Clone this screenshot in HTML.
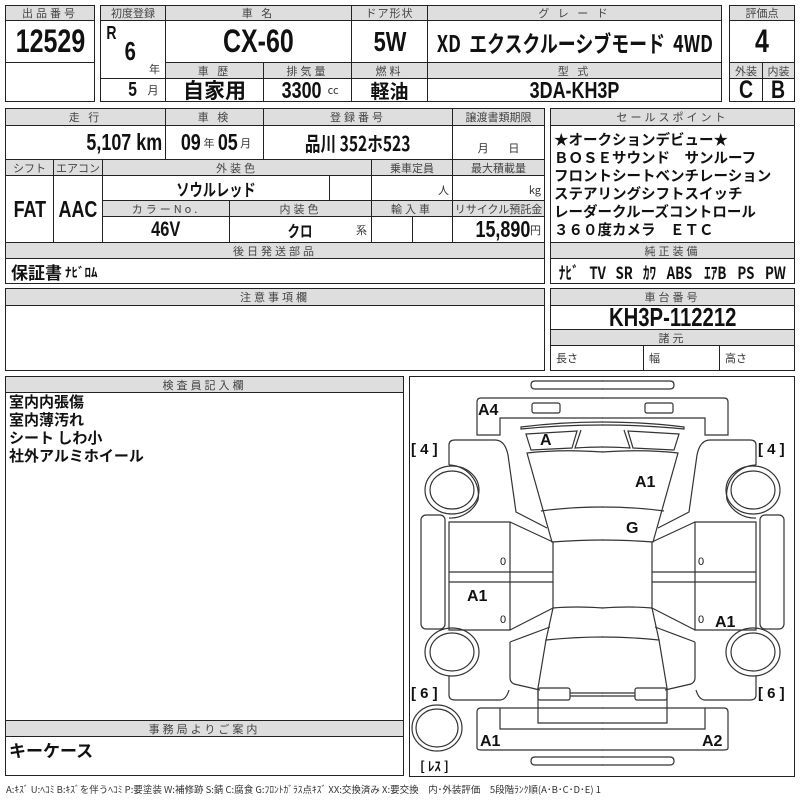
<!DOCTYPE html>
<html><head><meta charset="utf-8"><style>
body{margin:0;width:800px;height:800px;background:#fff;position:relative;overflow:hidden;font-family:"Liberation Sans","Noto Sans CJK JP",sans-serif;color:#111}
.c{position:absolute;border:1px solid #222;box-sizing:border-box;display:flex;align-items:center;justify-content:center;white-space:nowrap}
.h{background:#dedede;font-size:11px;color:#444;letter-spacing:3px;font-family:"Noto Sans CJK JP",sans-serif}
.v{font-weight:bold;font-size:20px;font-family:"Liberation Sans","Noto Sans CJK JP",sans-serif}
.n{display:inline-block;transform:scaleX(.78)}
.nr{display:inline-block;transform:scaleX(.78);transform-origin:right center}
.j{font-family:"Noto Sans CJK JP",sans-serif;font-weight:bold}
.s{font-size:11px;font-weight:normal;font-family:"Noto Sans CJK JP",sans-serif;color:#333}
.t{position:absolute;white-space:nowrap}
</style></head><body>
<div class="c h" style="left:5px;top:5px;width:90px;height:16px">出品番号</div>
<div class="c v" style="left:5px;top:20px;width:90px;height:43px;font-size:32px"><span class="n">12529</span></div>
<div class="c" style="left:5px;top:62px;width:90px;height:40px"></div>
<div class="c h" style="left:100px;top:5px;width:66px;height:16px;letter-spacing:0">初度登録</div>
<div class="c h" style="left:165px;top:5px;width:187px;height:16px">車 名</div>
<div class="c h" style="left:351px;top:5px;width:77px;height:16px;letter-spacing:1px">ドア形状</div>
<div class="c h" style="left:427px;top:5px;width:295px;height:16px">グ レ ー ド</div>
<div class="c" style="left:100px;top:20px;width:66px;height:59px"></div>
<div class="t v" style="left:105px;top:23px;font-size:18px"><span class="n">R</span></div>
<div class="t v" style="left:123px;top:36px;font-size:26px"><span class="n">6</span></div>
<div class="t s" style="left:149px;top:61px">年</div>
<div class="c v" style="left:165px;top:20px;width:187px;height:43px;font-size:32px"><span class="n">CX-60</span></div>
<div class="c v" style="left:351px;top:20px;width:77px;height:43px;font-size:28px"><span class="n">5W</span></div>
<div class="c v j" style="left:427px;top:20px;width:295px;height:43px;font-size:23px"><span class="n">XD&nbsp; エクスクルーシブモード&nbsp; 4WD</span></div>
<div class="c h" style="left:165px;top:62px;width:99px;height:17px">車 歴</div>
<div class="c h" style="left:263px;top:62px;width:89px;height:17px">排気量</div>
<div class="c h" style="left:351px;top:62px;width:77px;height:17px">燃料</div>
<div class="c h" style="left:427px;top:62px;width:295px;height:17px">型 式</div>
<div class="c" style="left:100px;top:78px;width:66px;height:24px"><span class="v n" style="margin-left:20px">5</span>&nbsp;&nbsp;<span class="s">月</span></div>
<div class="c v j" style="left:165px;top:78px;width:99px;height:24px;font-size:21px">自家用</div>
<div class="c" style="left:263px;top:78px;width:89px;height:24px"><span class="v n" style="font-size:23px">3300</span><span class="s">cc</span></div>
<div class="c v j" style="left:351px;top:78px;width:77px;height:24px;font-size:19px">軽油</div>
<div class="c v" style="left:427px;top:78px;width:295px;height:24px;font-size:23px"><span class="n">3DA-KH3P</span></div>
<div class="c h" style="left:729px;top:5px;width:66px;height:16px;letter-spacing:0">評価点</div>
<div class="c v" style="left:729px;top:20px;width:66px;height:43px;font-size:32px"><span class="n">4</span></div>
<div class="c h" style="left:729px;top:62px;width:34px;height:17px;letter-spacing:0">外装</div>
<div class="c h" style="left:762px;top:62px;width:33px;height:17px;letter-spacing:0">内装</div>
<div class="c v" style="left:729px;top:78px;width:34px;height:24px;font-size:25px"><span class="n">C</span></div>
<div class="c v" style="left:762px;top:78px;width:33px;height:24px;font-size:25px"><span class="n">B</span></div>

<div class="c h" style="left:5px;top:108px;width:161px;height:18px">走 行</div>
<div class="c h" style="left:165px;top:108px;width:99px;height:18px">車 検</div>
<div class="c h" style="left:263px;top:108px;width:190px;height:18px">登録番号</div>
<div class="c h" style="left:452px;top:108px;width:93px;height:18px;letter-spacing:0">譲渡書類期限</div>
<div class="c v" style="left:5px;top:125px;width:161px;height:35px;justify-content:flex-end;padding-right:3px;font-size:23px"><span class="nr">5,107 km</span></div>
<div class="c" style="left:165px;top:125px;width:99px;height:35px"><span class="v n" style="font-size:23px">09</span><span class="s">年</span><span class="v n" style="font-size:23px">05</span><span class="s">月</span></div>
<div class="c v j" style="left:263px;top:125px;width:190px;height:35px;font-size:20px"><span class="n">品川 352ホ523</span></div>
<div class="c" style="left:452px;top:125px;width:93px;height:35px;align-items:flex-end;padding-bottom:3px"><span class="s">月&nbsp;&nbsp;&nbsp;&nbsp;&nbsp;&nbsp;&nbsp;&nbsp;日</span></div>
<div class="c h" style="left:5px;top:159px;width:49px;height:17px;letter-spacing:0">シフト</div>
<div class="c h" style="left:53px;top:159px;width:50px;height:17px;letter-spacing:0">エアコン</div>
<div class="c h" style="left:102px;top:159px;width:270px;height:17px">外装色</div>
<div class="c h" style="left:371px;top:159px;width:82px;height:17px;letter-spacing:0">乗車定員</div>
<div class="c h" style="left:452px;top:159px;width:93px;height:17px;letter-spacing:0">最大積載量</div>
<div class="c v" style="left:5px;top:175px;width:49px;height:68px;font-size:23px"><span class="n">FAT</span></div>
<div class="c v" style="left:53px;top:175px;width:50px;height:68px;font-size:23px"><span class="n">AAC</span></div>
<div class="c v j" style="left:102px;top:175px;width:228px;height:26px;font-size:17px"><span class="n">ソウルレッド</span></div>
<div class="c" style="left:329px;top:175px;width:43px;height:26px"></div>
<div class="c" style="left:371px;top:175px;width:82px;height:26px;justify-content:flex-end;align-items:flex-end;padding:0 3px 2px 0"><span class="s">人</span></div>
<div class="c" style="left:452px;top:175px;width:93px;height:26px;justify-content:flex-end;align-items:flex-end;padding:0 3px 2px 0"><span class="s">kg</span></div>
<div class="c h" style="left:102px;top:200px;width:128px;height:17px">カラーNo.</div>
<div class="c h" style="left:229px;top:200px;width:143px;height:17px">内装色</div>
<div class="c h" style="left:371px;top:200px;width:82px;height:17px">輸入車</div>
<div class="c h" style="left:452px;top:200px;width:93px;height:17px;letter-spacing:0">リサイクル預託金</div>
<div class="c v" style="left:102px;top:216px;width:128px;height:27px;font-size:21px"><span class="n">46V</span></div>
<div class="c" style="left:229px;top:216px;width:143px;height:27px"><span class="v j n" style="font-size:16px">クロ</span><span class="s" style="position:absolute;right:4px">系</span></div>
<div class="c" style="left:371px;top:216px;width:42px;height:27px"></div>
<div class="c" style="left:412px;top:216px;width:41px;height:27px"></div>
<div class="c" style="left:452px;top:216px;width:93px;height:27px;justify-content:flex-end;padding-right:3px"><span class="v nr" style="font-size:23px">15,890</span><span class="s">円</span></div>
<div class="c h" style="left:5px;top:242px;width:540px;height:17px">後日発送部品</div>
<div class="c v j" style="left:5px;top:258px;width:540px;height:26px;justify-content:flex-start;padding-left:5px;font-size:17px">保証書 <span style="font-size:13px">&nbsp;ﾅﾋﾞﾛﾑ</span></div>
<div class="c h" style="left:550px;top:108px;width:245px;height:18px">セールスポイント</div>
<div class="c j" style="left:550px;top:125px;width:245px;height:118px;display:block;font-size:14.5px;line-height:18px;padding:5px 0 0 3px;letter-spacing:0">★オークションデビュー★<br>ＢＯＳＥサウンド　サンルーフ<br>フロントシートベンチレーション<br>ステアリングシフトスイッチ<br>レーダークルーズコントロール<br>３６０度カメラ　ＥＴＣ</div>
<div class="c h" style="left:550px;top:242px;width:245px;height:17px">純正装備</div>
<div class="c v j" style="left:550px;top:258px;width:245px;height:26px;font-size:17px;justify-content:space-around;padding:0 2px">
<span class="n">ﾅﾋﾞ</span><span class="n">TV</span><span class="n">SR</span><span class="n">ｶﾜ</span><span class="n">ABS</span><span class="n">ｴｱB</span><span class="n">PS</span><span class="n">PW</span></div>

<div class="c h" style="left:5px;top:288px;width:540px;height:18px">注意事項欄</div>
<div class="c" style="left:5px;top:305px;width:540px;height:66px"></div>
<div class="c h" style="left:550px;top:288px;width:245px;height:18px">車台番号</div>
<div class="c v" style="left:550px;top:305px;width:245px;height:25px;font-size:26px"><span class="n">KH3P-112212</span></div>
<div class="c h" style="left:550px;top:329px;width:245px;height:17px">諸元</div>
<div class="c" style="left:550px;top:345px;width:94px;height:26px;justify-content:flex-start;padding-left:5px"><span class="s">長さ</span></div>
<div class="c" style="left:643px;top:345px;width:77px;height:26px;justify-content:flex-start;padding-left:5px"><span class="s">幅</span></div>
<div class="c" style="left:719px;top:345px;width:76px;height:26px;justify-content:flex-start;padding-left:5px"><span class="s">高さ</span></div>

<div class="c" style="left:5px;top:376px;width:399px;height:400px"></div>
<div class="c h" style="left:5px;top:376px;width:399px;height:17px">検査員記入欄</div>
<div class="t j" style="left:9px;top:393px;font-size:15px;line-height:18px">室内内張傷<br>室内薄汚れ<br>シート しわ小<br>社外アルミホイール</div>
<div class="c h" style="left:5px;top:720px;width:399px;height:17px">事務局よりご案内</div>
<div class="t j" style="left:9px;top:737px;font-size:17px">キーケース</div>
<div class="c" style="left:409px;top:376px;width:386px;height:401px"></div>
<div class="t" style="left:6px;top:782px;font-size:9.5px;color:#333;font-family:'Noto Sans CJK JP',sans-serif">A:ｷｽﾞ U:ﾍｺﾐ B:ｷｽﾞを伴うﾍｺﾐ P:要塗装 W:補修跡 S:錆 C:腐食 G:ﾌﾛﾝﾄｶﾞﾗｽ点ｷｽﾞ XX:交換済み X:要交換　内･外装評価　5段階ﾗﾝｸ順(A･B･C･D･E) 1</div>
<svg style="position:absolute;left:0;top:0" width="800" height="800" fill="none" stroke="#333" stroke-width="1.2">
<g id="half">
<path d="M603,381 H535 Q531,381 531,385 Q531,389 535,389 H603"/>
<path d="M603,398 H481 Q477,398 477,402 V435 H500 V418 H603"/>
<rect x="532" y="403" width="28" height="10" rx="2"/>
<path d="M603,422 Q560,422 521,427 L521,429 Q560,425 603,425"/>
<path d="M526,434 L577,431 L572,448 L531,450 Z"/>
<path d="M581,430 L575,448 Q590,447 603,447"/>
<path d="M603,452 Q560,449 527,453 L552,542 Q580,540 603,540"/>
<path d="M541,511 Q570,507 603,507"/>
<path d="M603,608 Q575,606 553,608 L553,542"/>
<path d="M553,608 L546,640 Q575,637 603,637"/>
<path d="M546,640 L538,688 V723 H603"/>
<rect x="538" y="688" width="32" height="12" rx="2"/><path d="M570,693 H603 M570,696 H603"/>
<path d="M603,708 H481 Q477,708 477,712 V748 Q477,750 481,750 H603 M603,729 H500 V708"/>
<path d="M603,757 H535 Q531,757 531,761 Q531,765 535,765 H603"/>
<path d="M449,465 V445 Q449,440 455,440 H495 Q505,440 508,455 L516,512 L547,528"/>
<path d="M449,465 A30,30 0 0 1 478,500"/>
<path d="M449,518 A30,30 0 0 0 478,500"/>
<ellipse cx="452" cy="490" rx="27" ry="24"/><ellipse cx="452" cy="490" rx="22" ry="19"/>
<rect x="421" y="515" width="24" height="114" rx="5"/>
<path d="M449,522 H510 V630 H449 Z M449,572 H553 M449,582 H553 M510,522 L553,542 M510,630 L553,608"/>
<path d="M510,642 L550,627 M510,642 V678 Q510,682 514,684 L540,690"/>
<path d="M449,676 V695 Q449,700 455,700 H500 Q506,700 509,690"/>
<ellipse cx="452" cy="652" rx="27" ry="24"/><ellipse cx="452" cy="652" rx="22" ry="19"/>
</g>
<use href="#half" transform="translate(1205,0) scale(-1,1)"/>
<ellipse cx="437" cy="728" rx="25" ry="23"/><ellipse cx="437" cy="728" rx="21" ry="19"/>
<g fill="#111" stroke="none" font-family="Liberation Sans,sans-serif" font-weight="bold" font-size="16">
<text x="478" y="415">A4</text><text x="540" y="445">A</text><text x="635" y="487">A1</text><text x="626" y="533">G</text>
<text x="467" y="601">A1</text><text x="715" y="627">A1</text><text x="480" y="746">A1</text><text x="702" y="746">A2</text>
<text x="411" y="454" font-size="15">[ 4 ]</text><text x="758" y="454" font-size="15">[ 4 ]</text>
<text x="411" y="698" font-size="15">[ 6 ]</text><text x="758" y="698" font-size="15">[ 6 ]</text>
<text x="420" y="771" font-size="13" font-family="Noto Sans CJK JP,sans-serif">[ ﾚｽ ]</text>
<g font-weight="normal" font-size="11"><text x="500" y="565">0</text><text x="500" y="623">0</text><text x="698" y="565">0</text><text x="698" y="623">0</text></g>
</g>
</svg>
</body></html>
